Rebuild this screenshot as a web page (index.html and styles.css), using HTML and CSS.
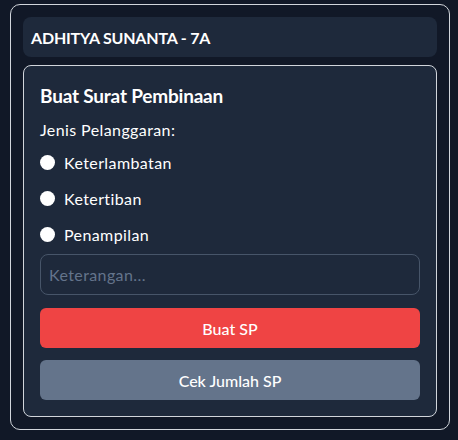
FILE: index.html
```html
<!DOCTYPE html>
<html lang="id">
<head>
<meta charset="utf-8">
<link rel="stylesheet" href="styles.css">
</head>
<body>
<div class="shell">
  <div class="header">ADHITYA SUNANTA - 7A</div>
  <div class="card">
    <h2 class="title">Buat Surat Pembinaan</h2>
    <div class="label">Jenis Pelanggaran:</div>
    <div class="options">
      <label class="option"><input type="radio" name="jenis" class="radio"><span>Keterlambatan</span></label>
      <label class="option"><input type="radio" name="jenis" class="radio"><span>Ketertiban</span></label>
      <label class="option"><input type="radio" name="jenis" class="radio"><span>Penampilan</span></label>
    </div>
    <input type="text" class="field" placeholder="Keterangan...">
    <button class="btn btn-red">Buat SP</button>
    <button class="btn btn-gray">Cek Jumlah SP</button>
  </div>
</div>
</body>
</html>
```
FILE: styles.css
```css
* { box-sizing: border-box; }
html, body { margin: 0; padding: 0; }
body {
  background: #111827;
  font-family: "Lato", "Noto Sans", sans-serif;
  color: #ffffff;
  padding: 4px 8px 0 10px;
}
.shell {
  width: 440px;
  border: 1px solid #d1d5db;
  border-radius: 10px;
  padding: 12px;
  display: flex;
  flex-direction: column;
  gap: 8px;
}
.header {
  background: #1e293b;
  border-radius: 8px;
  height: 40px;
  padding: 0 8px;
  display: flex;
  align-items: center;
  font-weight: 700;
  font-size: 16px;
  letter-spacing: -0.2px;
}
.card {
  background: #1e293b;
  border: 1px solid #d1d5db;
  border-radius: 8px;
  padding: 16px;
  display: flex;
  flex-direction: column;
}
.title {
  margin: 0;
  font-size: 19px;
  line-height: 28px;
  font-weight: 700;
  letter-spacing: -0.2px;
}
.label {
  margin-top: 8px;
  font-size: 16px;
  line-height: 24px;
  letter-spacing: 0.4px;
}
.options {
  margin-top: 8px;
  display: flex;
  flex-direction: column;
  gap: 12px;
}
.option {
  display: flex;
  align-items: center;
  gap: 9px;
  height: 24px;
  font-size: 16px;
  letter-spacing: 0.4px;
}
.radio {
  appearance: none;
  -webkit-appearance: none;
  margin: 0;
  width: 15px;
  height: 15px;
  border-radius: 50%;
  background: #ffffff;
}
.field {
  margin-top: 8px;
  height: 41px;
  background: #1e293b;
  border: 1px solid #475569;
  border-radius: 8px;
  padding: 0 8px;
  font-family: inherit;
  font-size: 16px;
  letter-spacing: 0.4px;
  color: #ffffff;
}
.field::placeholder { color: #64748b; }
.btn {
  margin-top: 12px;
  height: 40px;
  border: none;
  border-radius: 6px;
  font-family: inherit;
  font-size: 16px;
  font-weight: 500;
  color: #ffffff;
}
.btn-red { background: #ef4444; margin-top: 13px; }
.btn-gray { background: #64748b; }
```
